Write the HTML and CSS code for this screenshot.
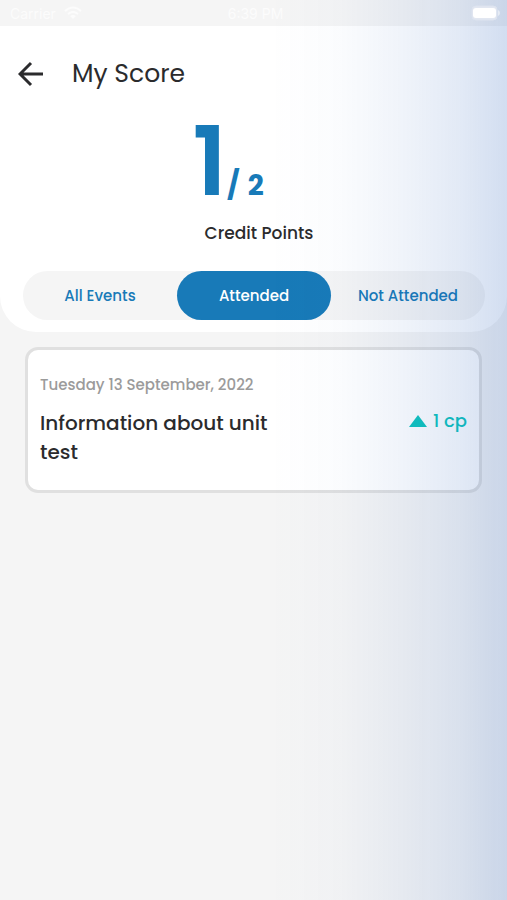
FILE: index.html
```html
<!DOCTYPE html>
<html lang="en">
<head>
  <meta charset="utf-8">
  <meta name="viewport" content="width=device-width, initial-scale=1">
  <title>My Score</title>
  <link rel="stylesheet" href="styles.css">
</head>
<body>
  <div class="status">
    <div class="status-left">
      <span>Carrier</span>
      <svg class="wifi" viewBox="0 0 18 14" aria-hidden="true">
        <path d="M1 5Q9-2 17 5M4 8Q9 4 14 8" fill="none" stroke="currentColor" stroke-width="2"/>
        <path d="M6 10Q9 8 12 10L9 13Z" fill="currentColor"/>
      </svg>
    </div>
    <span class="clock">6:39 PM</span>
    <svg class="battery" viewBox="0 0 30 16" aria-hidden="true">
      <rect class="battery-case" x="1" y="1" width="25" height="14" rx="4"/>
      <rect class="battery-fill" x="2" y="3" width="23" height="10" rx="3"/>
      <path class="battery-tip" d="M27 5q2 1 2 3t-2 3z"/>
    </svg>
  </div>
  <header class="header">
    <div class="titlebar">
      <button class="back" type="button" aria-label="Back">
        <svg viewBox="0 0 26 26" aria-hidden="true">
          <path d="M25 13H2M13 2L2 13l11 11" fill="none" stroke="currentColor" stroke-width="3"/>
        </svg>
      </button>
      <h1 class="title">My Score</h1>
    </div>
    <div class="score"><span class="earned">1</span><span class="slash">/</span><span class="total">2</span></div>
    <p class="caption">Credit Points</p>
    <nav class="tabs">
      <button class="tab" type="button">All Events</button>
      <button class="tab active" type="button">Attended</button>
      <button class="tab" type="button">Not Attended</button>
    </nav>
  </header>
  <main class="list">
    <article class="card">
      <p class="date">Tuesday 13 September, 2022</p>
      <div class="card-row">
        <h2 class="event">Information about unit test</h2>
        <div class="points">
          <svg viewBox="0 0 18 12" aria-hidden="true"><path d="M9 0l9 12H0z" fill="currentColor"/></svg>
          <span>1 cp</span>
        </div>
      </div>
    </article>
  </main>
</body>
</html>
```

FILE: styles.css
```css
* {
  box-sizing: border-box;
}

body {
  margin: 0;
  min-height: 100vh;
  background: #f5f5f5;
  color: #2b2b2d;
  font-family: Poppins, Inter, sans-serif;
}

/* Blue tint that deepens toward the right edge of the window */
body::after {
  content: "";
  position: fixed;
  inset: 0;
  pointer-events: none;
  background: linear-gradient(to right,
    rgba(30, 88, 183, 0) 53%,
    rgba(30, 88, 183, 0.02) 67%,
    rgba(30, 88, 183, 0.07) 80%,
    rgba(30, 88, 183, 0.13) 91%,
    rgba(30, 88, 183, 0.2) 100%);
}

h1, h2, p {
  margin: 0;
}

button {
  padding: 0;
  border: 0;
  background: none;
  font: inherit;
  cursor: pointer;
}

svg {
  display: block;
}

.status {
  display: grid;
  grid-template-columns: 1fr auto 1fr;
  align-items: center;
  height: 26px;
  padding: 0 6px 0 10px;
  color: #fcfcfc;
  font-family: Inter, sans-serif;
  font-size: 14px;
}

.status-left {
  display: flex;
  align-items: center;
  gap: 8px;
}

.wifi {
  width: 18px;
  height: 14px;
}

.battery {
  justify-self: end;
  position: relative;
  z-index: 1;
  width: 30px;
  height: 16px;
}

.battery-case {
  fill: #e2e7f1;
  stroke: #dde3ef;
}

.battery-fill {
  fill: #fff;
}

.battery-tip {
  fill: #e6ebf4;
}

.header {
  padding: 32px 22px 12px 23px;
  border-radius: 0 0 36px 36px;
  background: #fff;
}

.titlebar {
  display: flex;
  align-items: center;
  gap: 28px;
  height: 32px;
  margin-left: -5px;
}

.back {
  width: 26px;
  height: 26px;
  color: #2b2b2d;
}

.title {
  font-size: 25px;
  line-height: 34px;
  font-weight: 400;
}

.score {
  display: flex;
  justify-content: center;
  align-items: baseline;
  height: 128px;
  padding-right: 52px;
  color: #187ab8;
  font-weight: 700;
  line-height: 144px;
}

.earned {
  font-size: 96px;
  font-weight: 600;
}

.slash {
  font-size: 28px;
}

.total {
  margin-left: 8px;
  font-size: 28px;
}

.caption {
  padding-left: 10px;
  text-align: center;
  font-size: 17px;
  line-height: 30px;
  font-weight: 500;
}

.tabs {
  display: grid;
  grid-template-columns: repeat(3, 1fr);
  height: 49px;
  margin-top: 23px;
  border-radius: 25px;
  background: #f5f5f5;
}

.tab {
  border-radius: 25px;
  color: #187ab8;
  font-size: 15px;
  font-weight: 500;
}

.tab.active {
  background: #187ab8;
  color: #fff;
}

.list {
  padding: 15px 25px;
}

.card {
  padding: 25px 12px 23px;
  border: 3px solid #e0e0e0;
  border-radius: 13px;
  background: #fff;
}

.date {
  color: #9b9b9b;
  font-size: 15px;
  line-height: 20px;
  font-weight: 500;
}

.card-row {
  display: flex;
  justify-content: space-between;
  align-items: flex-start;
  margin-top: 14px;
}

.event {
  max-width: 240px;
  font-size: 20px;
  line-height: 29px;
  font-weight: 500;
}

.points {
  display: flex;
  align-items: center;
  gap: 6px;
  color: #0fc4be;
  font-size: 18px;
  line-height: 24px;
  font-weight: 500;
}

.points svg {
  width: 18px;
  height: 12px;
}
```
